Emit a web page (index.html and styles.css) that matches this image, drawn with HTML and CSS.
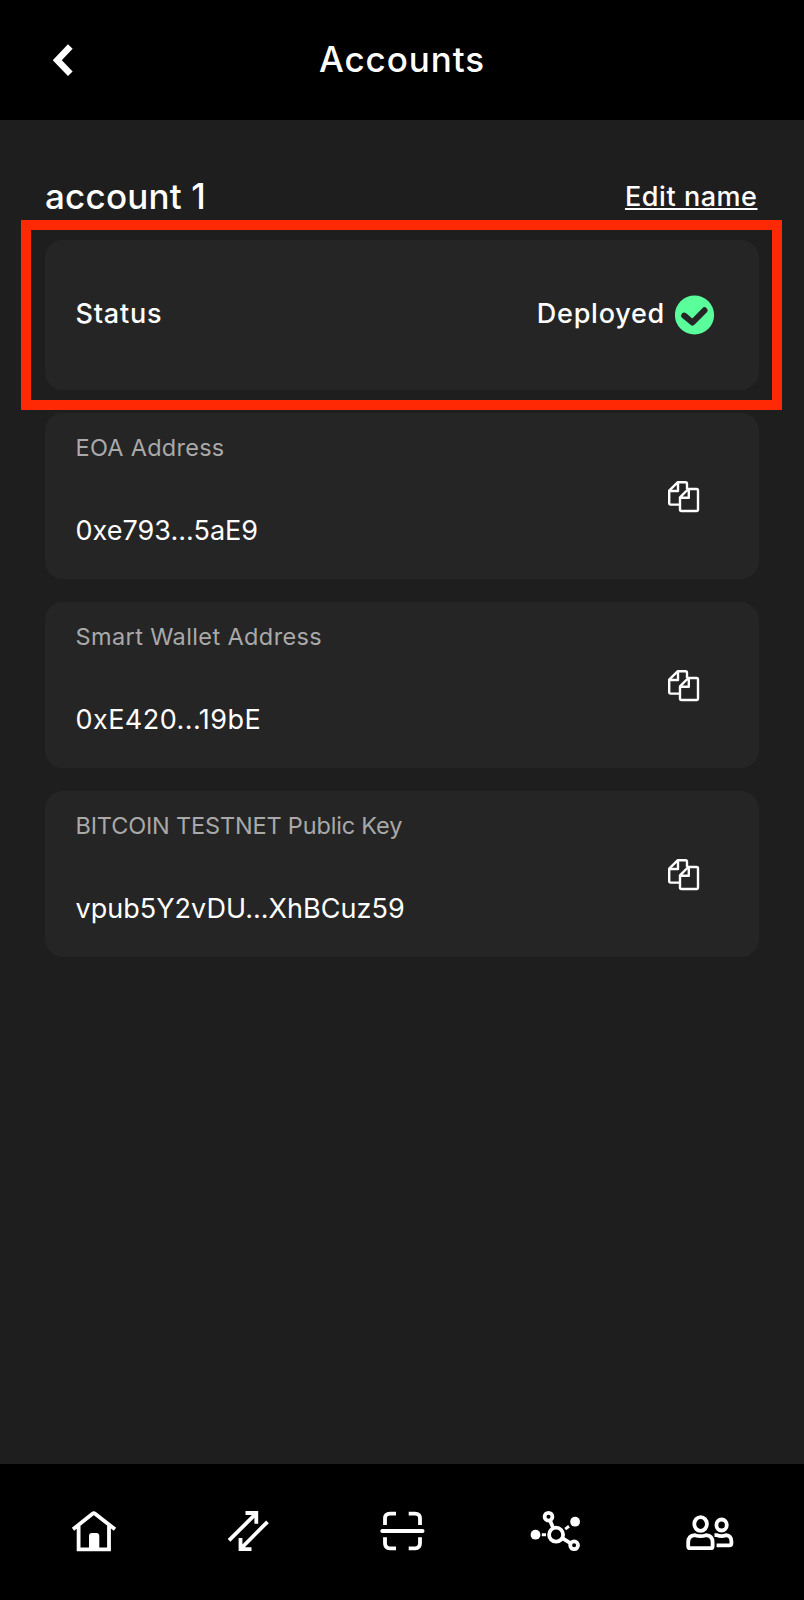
FILE: index.html
```
<!DOCTYPE html>
<html lang="en">
<head>
<meta charset="utf-8">
<title>Accounts</title>
<link rel="stylesheet" href="styles.css">
</head>
<body>
<svg class="defs" aria-hidden="true">
  <symbol id="copy" viewBox="0 0 32 32">
    <path d="M11.500 23.600H2.700Q1.200 23.600 1.200 22.100V9.600L9.600 1.300H17.500Q19 1.300 19 2.800V8M10 2V10H2"/>
    <path d="M12 16.300L20.300 8H28.500Q30 8 30 9.500V28.500Q30 30 28.500 30H13.500Q12 30 12 28.500ZM20.800 8.800V16.700H12.800"/>
  </symbol>
</svg>
<header class="header">
  <svg class="back" viewBox="0 0 22 36"><path d="M17.300 4.600L4.300 18.200L17.300 31.800"/></svg>
  <h1 class="title">Accounts</h1>
</header>
<main class="main">
  <div class="heading">
    <h2 class="account">account 1</h2>
    <a class="edit">Edit name</a>
  </div>
  <section class="card status">
    <div class="highlight"></div>
    <span class="status-label">Status</span>
    <div class="state">
      <span class="deployed">Deployed</span>
      <svg class="check" viewBox="0 0 40 40"><circle class="check-disc" cx="19.500" cy="20" r="19.600"/><path class="check-mark" d="M9.200 20.600L17.500 27.500L29.500 15.300"/></svg>
    </div>
  </section>
  <section class="card item">
    <div><p class="label label-eoa">EOA Address</p><p class="value">0xe793...5aE9</p></div>
    <svg class="copy"><use href="#copy"/></svg>
  </section>
  <section class="card item">
    <div><p class="label label-wallet">Smart Wallet Address</p><p class="value value-wallet">0xE420...19bE</p></div>
    <svg class="copy"><use href="#copy"/></svg>
  </section>
  <section class="card item">
    <div><p class="label label-key">BITCOIN TESTNET Public Key</p><p class="value">vpub5Y2vDU...XhBCuz59</p></div>
    <svg class="copy"><use href="#copy"/></svg>
  </section>
</main>
<nav class="nav">
  <a class="tab"><svg viewBox="0 0 52 48"><path d="M5 22.300L24.500 6.800Q25.800 5.600 27.100 6.800L47 22.300M10.600 18V42.300H41V18"/><path class="solid" d="M21 42V29Q21 26 24 26H28.300Q31.300 26 31.300 29V42Z"/></svg></a>
  <a class="tab"><svg viewBox="0 0 52 48"><path d="M7 33.300L34 6.700M23.500 6H34.300V16.800M45.500 14.800L19 41.500M18.500 31V42.200H29.500"/></svg></a>
  <a class="tab"><svg viewBox="0 0 52 48"><path d="M9 18V11.700Q9 6.700 14 6.700H20M32.700 6.700H39Q44 6.700 44 11.700V18M9 30.300V36.300Q9 41.300 14 41.300H20M32.700 41.300H39Q44 41.300 44 36.300V30.300"/><path class="scan-line" d="M6.200 24H46.600"/></svg></a>
  <a class="tab"><svg viewBox="0 0 52 48"><circle cx="26.100" cy="27.700" r="7"/><circle cx="18.500" cy="9.700" r="3.900"/><circle cx="44.100" cy="38.300" r="3.900"/><path d="M20 13.500L23.300 21.200M32.300 31.200L40.800 36.300"/><path class="dash" d="M11.800 27.700H16M35.200 22.100L39 19.300"/><circle class="solid" cx="5.500" cy="27.700" r="4.900"/><circle class="solid" cx="45.100" cy="14.700" r="4.900"/></svg></a>
  <a class="tab"><svg viewBox="0 0 52 48"><ellipse cx="16.600" cy="17" rx="6.300" ry="6.900"/><ellipse cx="37.600" cy="18" rx="5.200" ry="5.500"/><path d="M11 28.200Q4.200 28.500 4.200 35.500V39.200Q4.200 41.200 6.200 41.200H26.600Q28.600 41.200 28.600 39.200V35.500Q28.600 28.500 22 28.200Q16.500 30.200 11 28.200ZM30.500 28.200H33Q37.500 30 42 28.200Q47.400 28.800 47.400 34.500V36.300Q47.400 38.300 45.400 38.300H32.600"/></svg></a>
</nav>
</body>
</html>
```
FILE: styles.css
```
* { box-sizing: border-box; }
body { margin: 0; height: 1600px; display: flex; flex-direction: column; background: #1e1e1e; color: #fff; font-family: Inter, sans-serif; }
h1, h2, p { margin: 0; }
h1, h2 { font-size: 35px; line-height: 42px; font-weight: 500; }
svg { fill: none; stroke: #fff; flex: none; display: block; }
.defs { display: none; }
.solid { fill: #fff; stroke: none; }

.header { height: 120px; background: #000; display: grid; grid-template-columns: 120px 1fr 120px; }
.back { width: 22px; height: 36px; margin: 42px 0 0 53px; stroke-width: 6.5; }
.title { padding-top: 38px; text-align: center; letter-spacing: 0.9px; }

.main { flex: 1; padding: 55px 45px 0; }
.heading { height: 65px; display: flex; justify-content: space-between; }
.account { letter-spacing: 0.2px; }
.edit, .status-label, .deployed { font-size: 27px; line-height: 34px; font-weight: 500; }
.edit { padding: 5px 1.5px 0 0; letter-spacing: 0.55px; text-decoration: underline; text-decoration-thickness: 2px; text-underline-offset: 2px; text-decoration-skip-ink: none; }

.card { height: 166px; margin-bottom: 23px; padding: 0 59px 0 30.5px; display: flex; justify-content: space-between; background: #252525; border-radius: 18px; }
.status { position: relative; height: 150px; align-items: center; padding: 0 44px 0 30.5px; }
.highlight { position: absolute; inset: -20px -23px -20px -24px; border: 10px solid #ff2a04; }
.status-label { padding-bottom: 2px; letter-spacing: 0.8px; }
.state { display: flex; align-items: center; gap: 10px; }
.deployed { padding-bottom: 2px; letter-spacing: 0.75px; }
.check { width: 40px; height: 40px; }
.check-disc { fill: #5aff9c; stroke: none; }
.check-mark { stroke: #252525; stroke-width: 6; stroke-linejoin: round; stroke-linecap: round; }

.label { padding-top: 18px; font-size: 23.5px; line-height: 34px; color: #a9a9a9; }
.label-eoa { letter-spacing: 0.27px; }
.label-wallet { letter-spacing: 0.39px; }
.label-key { letter-spacing: -0.17px; }
.value { margin-top: 49px; font-size: 27px; line-height: 34px; letter-spacing: 0.03px; }
.value-wallet { letter-spacing: 0.45px; }
.copy { width: 32px; height: 32px; margin-top: 68px; stroke-width: 2.4; stroke-linejoin: round; }

.nav { height: 136px; padding: 43px 16.5px 0; background: #000; display: grid; grid-template-columns: repeat(5, 1fr); justify-items: center; align-items: start; }
.tab svg { width: 52px; height: 48px; stroke-width: 3.8; }
.tab .scan-line { stroke-linecap: round; }
.tab .dash { stroke-width: 3; }
```
